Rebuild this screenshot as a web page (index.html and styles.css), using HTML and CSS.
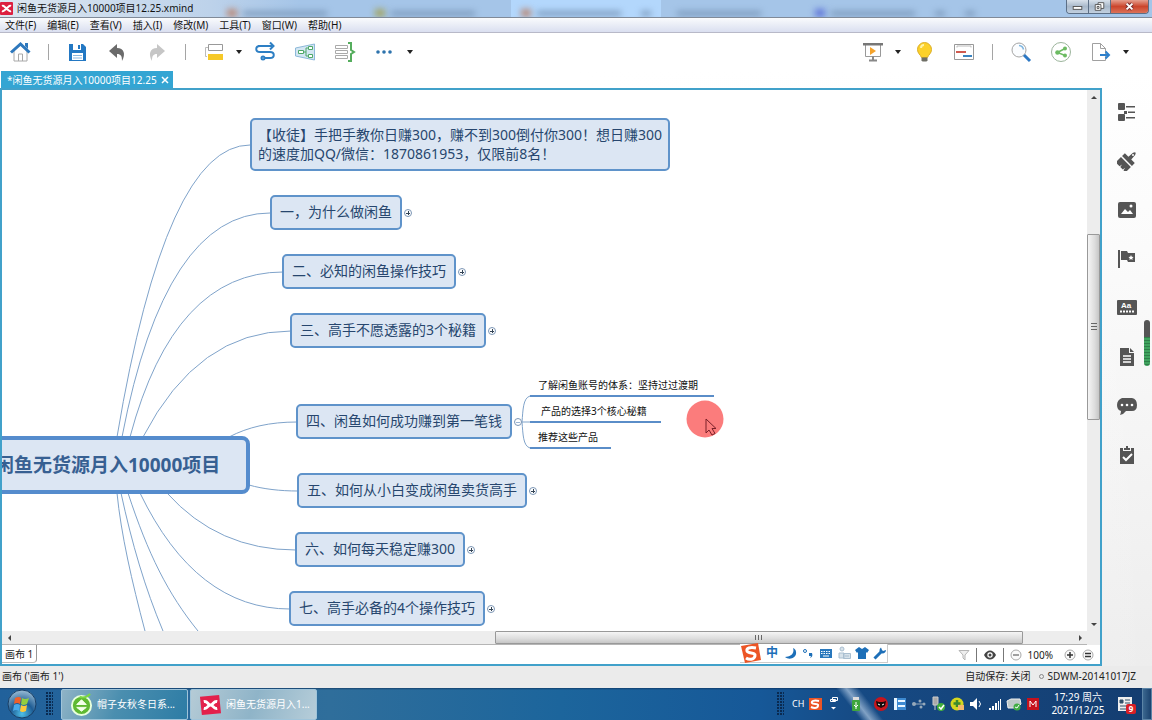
FILE: index.html
```html
<!DOCTYPE html>
<html lang="zh-CN">
<head>
<meta charset="utf-8">
<title>闲鱼无货源月入10000项目12.25.xmind</title>
<link rel="stylesheet" href="styles.css">
</head>
<body>
<header class="titlebar">
  <svg class="app-logo" viewBox="0 0 13 13"><rect width="13" height="13" rx="1" fill="#dc2040"/><path d="M2 4C4 3 5 6 6.500 6S9 3 11 4M2 9C4 10 5 7 6.500 7S9 10 11 9" fill="none" stroke="#fff" stroke-width="2"/></svg>
  <h1 class="title">闲鱼无货源月入10000项目12.25.xmind</h1>
  <div class="backdrop" aria-hidden="true">
    <i class="smudge orange"></i><i class="smudge long"></i><i class="smudge olive"></i><i class="smudge long"></i>
    <div class="lit"><i class="smudge orange"></i><i class="smudge long"></i><i class="smudge dot"></i></div>
    <i class="smudge long"></i><i class="smudge violet"></i><i class="smudge long"></i><i class="smudge dot"></i><i class="smudge dot"></i>
  </div>
  <div class="winbuttons">
    <button class="win" aria-label="最小化"><svg viewBox="0 0 22 13"><rect x="6.500" y="6.500" width="9" height="3" fill="#fff" stroke="#555"/></svg></button>
    <button class="win" aria-label="还原"><svg viewBox="0 0 22 13"><path d="M9.500 2.500h6v6h-6z" fill="#fff" stroke="#555"/><path d="M6.500 4.500h6v6h-6z" fill="#fff" stroke="#555"/><path d="M8.500 6.500h2v2h-2z" fill="none" stroke="#555"/></svg></button>
    <button class="win close" aria-label="关闭"><svg viewBox="0 0 38 13"><path d="M16 3.500l6 6M22 3.500l-6 6" stroke="#7a3030" stroke-width="4"/><path d="M16 3.500l6 6M22 3.500l-6 6" stroke="#fff" stroke-width="2"/></svg></button>
  </div>
</header>
<nav class="menubar">
  <button>文件(F)</button><button>编辑(E)</button><button>查看(V)</button><button>插入(I)</button><button>修改(M)</button><button>工具(T)</button><button>窗口(W)</button><button>帮助(H)</button>
</nav>
<div class="toolbar">
  <button class="tool" aria-label="主页"><svg viewBox="0 0 24 24"><path d="M6 11v10h13V11l-6.500-6z" fill="#fff" stroke="#a8a8a8"/><path d="M10.500 21v-7h4v7" fill="none" stroke="#a8a8a8"/><path d="M3 12.500L12.500 4l9 8.500" fill="none" stroke="#2d78bd" stroke-width="3"/><path d="M17 3h3v6l-3-3z" fill="#2d78bd"/></svg></button>
  <i class="sep"></i>
  <button class="tool" aria-label="保存"><svg viewBox="0 0 24 24"><path d="M4 4h14l3 3v14H4z" fill="#2378c3"/><path d="M8 4h8v6H8z" fill="#fff"/><path d="M13 5h2v4h-2z" fill="#2378c3"/><path d="M7 13h11v7H7z" fill="#fff"/><path d="M8 15.500h9M8 18h9" stroke="#8bb7df"/></svg></button>
  <button class="tool" aria-label="撤销"><svg viewBox="0 0 24 24"><path d="M4 11l8-7v4c7 0 9 6 5 13 0-5-1-7-5-7v4z" fill="#6b6b6b"/></svg></button>
  <button class="tool" aria-label="重做"><svg viewBox="0 0 24 24"><path d="M20 11l-8-7v4c-7 0-9 6-5 13 0-5 1-7 5-7v4z" fill="#c6c6c6"/></svg></button>
  <i class="sep"></i>
  <div class="split"><button class="tool" aria-label="主题"><svg viewBox="0 0 24 24"><path d="M6.500 4.500h14v6h-14z" fill="#fff" stroke="#999"/><path d="M6 7.500H3.500v9H5" fill="none" stroke="#bbb"/><path d="M6 14h15v6H6z" fill="#f6c928"/></svg></button><button class="drop" aria-label="更多主题"></button></div>
  <button class="tool" aria-label="联系"><svg viewBox="0 0 24 24" fill="none" stroke="#2d7fc4" stroke-width="2"><path d="M5 6h14M17 2.500L20.500 6 17 9.500M7 6C2 6 2 12 7 12h10c5 0 5 6 0 6h-5"/><circle cx="10" cy="18" r="1.500"/></svg></button>
  <button class="tool" aria-label="外框"><svg viewBox="0 0 24 24"><path d="M2.500 8L21.500 4v16L2.500 16z" fill="#d3e6f3" stroke="#8db9d9"/><path d="M5.500 10.500h5v3h-5zM15.500 6.500h4v3h-4zM15.500 14.500h4v3h-4z" fill="#fff" stroke="#4fa968"/><path d="M10.500 12h2.500M15 8h-2v8h2" fill="none" stroke="#4fa968"/></svg></button>
  <button class="tool" aria-label="概要"><svg viewBox="0 0 24 24" fill="none"><path d="M2.500 5.500h12v3h-12zM2.500 10.500h12v3h-12zM2.500 15.500h12v3h-12z" stroke="#aaa"/><path d="M15 3h3v7l3 2-3 2v7h-3" stroke="#55ad5d" stroke-width="2"/></svg></button>
  <div class="split"><button class="tool" aria-label="更多"><svg viewBox="0 0 24 24" fill="#2d73ad"><circle cx="5" cy="12" r="1.800"/><circle cx="11" cy="12" r="1.800"/><circle cx="17" cy="12" r="1.800"/></svg></button><button class="drop" aria-label="更多选项"></button></div>
  <i class="grow"></i>
  <div class="split"><button class="tool" aria-label="演示"><svg viewBox="0 0 24 24"><path d="M4.500 5v11.500h15V5" fill="#fff" stroke="#999"/><path d="M2 3h20v2.500H2z" fill="#777"/><path d="M12 16.500V20M8 20.500h8" stroke="#888" stroke-width="2"/><path d="M9 7l6 4-6 4z" fill="#f5a32c"/></svg></button><button class="drop" aria-label="演示选项"></button></div>
  <button class="tool" aria-label="头脑风暴"><svg viewBox="0 0 24 24"><path d="M12.500 2.500a7 7 0 0 0-7 7c0 4 3 5 4 8h6c1-3 4-4 4-8a7 7 0 0 0-7-7z" fill="#fcd12a" stroke="#dcaf28"/><path d="M9 8c0-2 1-3 3-3" stroke="#fff3a5" stroke-width="2" fill="none"/><path d="M9.500 17.500h6v3l-1 1h-4l-1-1z" fill="#6f6f66"/></svg></button>
  <button class="tool" aria-label="甘特图"><svg viewBox="0 0 24 24"><path d="M2.500 4.500h19v15h-19z" fill="#fff" stroke="#999"/><path d="M5 7.500V6h14v1.500" stroke="#bbb" fill="none"/><path d="M4 12h10" stroke="#d05a4f" stroke-width="2"/><path d="M11 16h9" stroke="#3a83c0" stroke-width="2"/></svg></button>
  <i class="sep"></i>
  <button class="tool" aria-label="搜索"><svg viewBox="0 0 24 24"><circle cx="10" cy="10" r="7" fill="#fbfdff" stroke="#a5a5a5"/><path d="M10 5.500a5 5 0 0 1 4.500 4" stroke="#7db5e0" stroke-width="1.500" fill="none"/><path d="M15 15l6 6" stroke="#2d78c4" stroke-width="3"/></svg></button>
  <button class="tool" aria-label="分享"><svg viewBox="0 0 24 24"><circle cx="12" cy="12" r="9.500" fill="#fff" stroke="#9cb59c"/><path d="M16 8.500L8.500 12.500 16 15.500" fill="none" stroke="#6cbb62" stroke-width="1.500"/><g fill="#6cbb62"><circle cx="8.500" cy="12.500" r="2.300"/><circle cx="16" cy="8.500" r="2"/><circle cx="16" cy="15.500" r="2"/></g></svg></button>
  <div class="split last"><button class="tool" aria-label="导出"><svg viewBox="0 0 24 24"><path d="M3.500 3.500h8l5 5v12h-13z" fill="#fff" stroke="#a0a0a0"/><path d="M11.500 3.500v5h5" fill="none" stroke="#a0a0a0"/><path d="M11 15h8M16.500 11.500L20 15l-3.500 3.500" fill="none" stroke="#2e80cc" stroke-width="2"/></svg></button><button class="drop" aria-label="导出选项"></button></div>
</div>
<div class="workspace">
  <main class="editor">
    <div class="tabs"><div class="tab"><span>*闲鱼无货源月入10000项目12.25</span><button aria-label="关闭标签"><svg viewBox="0 0 8 8"><path d="M1 1l6 6M7 1L1 7" stroke="#fff" stroke-width="1.500"/></svg></button></div></div>
    <div class="frame">
      <div class="canvas">
        <svg class="links" width="1085" height="541" viewBox="2 90 1085 541">
          <g fill="none" stroke="#7fa3ca">
            <path d="M117 437Q166 145 250 145"/>
            <path d="M122 437Q165 213 270 213"/>
            <path d="M130 437Q174 272 283 272"/>
            <path d="M143 437Q198 331 291 331"/>
            <path d="M229 437C248 427 270 422 297 422"/>
            <path d="M249 485C263 489 280 491 298 491"/>
            <path d="M167 493Q218 550 296 550"/>
            <path d="M140 493Q196 609 290 609"/>
            <path d="M128 493C148 554 168 594 198 631"/>
            <path d="M121 493C132 544 145 588 163 631"/>
            <path d="M117 493C121 534 132 582 145 631"/>
            <path d="M521 422h9M530 396C523 398 523 410 522 422 523 434 523 446 530 448"/>
          </g>
        </svg>
        <div class="topic central">闲鱼无货源月入10000项目</div>
        <div class="topic main t0">【收徒】手把手教你日赚300，赚不到300倒付你300！想日赚300<br>的速度加QQ/微信：1870861953，仅限前8名！</div>
        <div class="topic main t1">一，为什么做闲鱼<button class="fold" aria-label="展开"></button></div>
        <div class="topic main t2">二、必知的闲鱼操作技巧<button class="fold" aria-label="展开"></button></div>
        <div class="topic main t3">三、高手不愿透露的3个秘籍<button class="fold" aria-label="展开"></button></div>
        <div class="topic main t4">四、闲鱼如何成功赚到第一笔钱<button class="fold open" aria-label="收起"></button></div>
        <div class="topic main t5">五、如何从小白变成闲鱼卖货高手<button class="fold" aria-label="展开"></button></div>
        <div class="topic main t6">六、如何每天稳定赚300<button class="fold" aria-label="展开"></button></div>
        <div class="topic main t7">七、高手必备的4个操作技巧<button class="fold" aria-label="展开"></button></div>
        <ul class="subtopics">
          <li class="s1">了解闲鱼账号的体系：坚持过过渡期</li>
          <li class="s2">产品的选择3个核心秘籍</li>
          <li class="s3">推荐这些产品</li>
        </ul>
        <svg class="pointer" viewBox="0 0 38 38"><circle cx="19" cy="19" r="18.500" fill="#fb7c7c"/><path d="M20 19v14l3-3 3 5 3-1.500-3-5h4z" fill="#fb7c7c" stroke="#7a2028"/></svg>
      </div>
      <div class="vscroll"><i class="arrow up"></i><i class="v-before"></i><i class="v-thumb"></i><i class="v-after"></i><i class="arrow down"></i></div>
      <div class="hscroll"><i class="arrow left"></i><i class="h-before"></i><i class="h-thumb"></i><i class="h-after"></i><i class="arrow right"></i></div>
      <div class="sheets">
        <button class="sheet">画布 1</button>
        <div class="zoombar">
          <button aria-label="筛选"><svg viewBox="0 0 12 12"><path d="M1 1.500h10L7 6v5L5 9V6z" fill="#eee" stroke="#b5b5b5"/></svg></button><i class="bar"></i>
          <button class="eye" aria-label="显示"><svg viewBox="0 0 14 12"><path d="M1 6c3-6 9-6 12 0-3 6-9 6-12 0z" fill="#444"/><circle cx="7" cy="6" r="2.700" fill="#fff"/><circle cx="7" cy="6" r="1.500" fill="#444"/></svg></button><i class="bar"></i>
          <button aria-label="缩小"><svg viewBox="0 0 12 12"><circle cx="6" cy="6" r="5" fill="#fafafa" stroke="#aaa"/><path d="M3 6h6" stroke="#444"/></svg></button>
          <span class="percent">100%</span>
          <button aria-label="放大"><svg viewBox="0 0 12 12"><circle cx="6" cy="6" r="5" fill="#fafafa" stroke="#aaa"/><path d="M3 6h6M6 3v6" stroke="#333" stroke-width="1.500"/></svg></button>
          <button aria-label="适应"><svg viewBox="0 0 12 12"><circle cx="6" cy="6" r="5" fill="#fafafa" stroke="#aaa"/><path d="M3 4.500h6M3 7.500h6" stroke="#333" stroke-width="1.500"/></svg></button>
        </div>
        <div class="ime">
          <svg class="ime-logo" viewBox="0 0 22 22"><path d="M1 4L18 1l3 17-16 3z" fill="#ec5526"/><path d="M16 6C10 5 6 6 7 9s9 1 8 5-6 4-9 2" fill="none" stroke="#fff" stroke-width="3"/></svg>
          <span class="zh">中</span>
          <svg viewBox="0 0 14 14"><path d="M10 2c2 6-3 9-8 9 5 4 12 0 11-5 0-2-1-3-3-4z" fill="#1d6fb8"/></svg>
          <svg viewBox="0 0 14 14"><circle cx="4" cy="5" r="1.500" fill="none" stroke="#1d6fb8"/><path d="M8 7h3c1 3 0 4-2 5l1-2H8z" fill="#1d6fb8"/></svg>
          <svg viewBox="0 0 14 14"><path d="M1 3h12v9H1z" fill="#2978bd"/><path d="M2 5.500h10M2 7.500h10" stroke="#fff" stroke-dasharray="1.500 1"/><path d="M4 10h6" stroke="#fff"/></svg>
          <svg viewBox="0 0 14 14" stroke="#a9bed0" fill="#d7e2ea"><circle cx="5" cy="3" r="2"/><path d="M2 12V7h5v5zM6.500 7.500h7v5h-7zM8 10h4"/></svg>
          <svg viewBox="0 0 14 14"><path d="M4 1l3 2 3-2 4 3-2 3-1-1v7H3V6L2 7 0 4z" fill="#1d6fb8"/></svg>
          <svg viewBox="0 0 14 14"><path d="M1.500 12.500L8 6" stroke="#1d6fb8" stroke-width="3"/><path d="M8 1.500C6 3 6 6 8 7s5 0 5-3l-3 1-1-1z" fill="#1d6fb8"/></svg>
        </div>
      </div>
    </div>
  </main>
  <aside class="sidebar">
    <div class="side-list">
      <button aria-label="大纲"><svg viewBox="0 0 20 20" fill="#555"><rect x="1" y="1" width="7" height="7" rx="1"/><rect x="1" y="12" width="7" height="7" rx="1"/><path d="M9 4h9v1.500H9zM9 15h9v1.500H9zM7 9h3v3H7zM11 9.500h7V11h-7z"/></svg></button>
      <button aria-label="格式"><svg viewBox="0 0 20 20"><g transform="rotate(45 10 10)" fill="#555"><path d="M8.500 0q1.500-4 3 0l.500 6H17v4H3V6h5z"/><path d="M3 11.500h14V19h-3l-.500-3-.500 3H9.500L9 16l-.500 3H3z"/></g><circle cx="16" cy="4" r="1" fill="#fff"/></svg></button>
      <button aria-label="图片"><svg viewBox="0 0 20 20"><rect x="1" y="2" width="18" height="16" rx="2" fill="#555"/><path d="M4 14l4-5 3 3 2-2 3 4z" fill="#fff"/><circle cx="14" cy="6" r="1.500" fill="#fff"/></svg></button>
      <button aria-label="图标"><svg viewBox="0 0 20 20"><path d="M1 1h2v18H1zM4 2h6l1 2h7v9h-7l-1-2H4z" fill="#555"/><path d="M14 6l.800 1.700 1.700.300-1.200 1.200.300 1.800-1.600-.900-1.600.900.300-1.800L11.500 8l1.700-.300z" fill="#fff"/></svg></button>
      <button aria-label="标签"><svg viewBox="0 0 20 20"><rect x="0" y="2" width="20" height="15" rx="1" fill="#555"/><text x="4" y="10" class="aa">Aa</text><path d="M3 13.500h14" stroke="#fff" stroke-width="2" stroke-dasharray="2 1"/></svg></button>
      <button aria-label="备注"><svg viewBox="0 0 20 20"><path d="M3 1h9v5h5v13H3z" fill="#555"/><path d="M13 1l4 4h-4z" fill="#555"/><path d="M6 9h8M6 12h8M6 15h8" stroke="#fff" stroke-width="1.300"/></svg></button>
      <button aria-label="批注"><svg viewBox="0 0 20 20"><path d="M5 2h10q5 1 5 7t-5 6H9q-2 3-6 4 1-2 1-4-4-1-4-6t5-7z" fill="#555"/><g fill="#fff"><circle cx="5" cy="9" r="1.300"/><circle cx="10" cy="9" r="1.300"/><circle cx="15" cy="9" r="1.300"/></g></svg></button>
      <button aria-label="任务"><svg viewBox="0 0 20 20"><path d="M3 3h3v3h8V3h3v16H3z" fill="#555"/><path d="M7 3h2V1h2v2h2v2H7z" fill="#555"/><path d="M6 12l3 3 6-6" fill="none" stroke="#fff" stroke-width="2"/></svg></button>
    </div>
    <i class="meter"></i>
  </aside>
</div>
<footer class="status"><span>画布 ('画布 1')</span><span class="saved">自动保存: 关闭</span><i class="ring"></i><span>SDWM-20141017JZ</span></footer>
<div class="taskbar">
  <button class="start" aria-label="开始"><svg viewBox="0 0 32 32"><defs><radialGradient id="orb" cx="50%" cy="85%" r="80%"><stop offset="0" stop-color="#4fc0e8"/><stop offset=".5" stop-color="#1e5c94"/><stop offset="1" stop-color="#8fb4cf"/></radialGradient></defs><circle cx="16" cy="16" r="14" fill="url(#orb)" stroke="#193f66"/><path d="M9 10q4-2 6 0l-1 6q-3-2-6 0z" fill="#f0602a"/><path d="M16 10q3 2 7 0l-2 6q-4 2-6 0z" fill="#93cf3f"/><path d="M8 17q3-2 6 0l-1 6q-3-2-6 0z" fill="#49a9ea"/><path d="M15 17q3 2 6 0l-1 6q-4 2-6 0z" fill="#fdc83a"/></svg></button>
  <i class="grip"></i>
  <button class="task"><svg viewBox="0 0 24 24"><circle cx="12" cy="13" r="10" fill="#5fb932" stroke="#e8ffdc" stroke-width="2"/><path d="M7 12h10l-5-5zM7 15h10l-5 4z" fill="#f3ffe9" stroke="#f3ffe9" stroke-linejoin="round"/><path d="M10 4q6 2 11-3" stroke="#7bd645" stroke-width="2" fill="none"/></svg><span>帽子女秋冬日系...</span></button>
  <button class="task active"><svg viewBox="0 0 24 24"><path d="M1 4l20-2 2 19-20 2z" fill="#e3214b"/><path d="M5 9c4-1 4 3.500 7 3.500s3-4.500 7-3.500M5 16c4 1 4-3.500 7-3.500s3 4.500 7 3.500" fill="none" stroke="#fff" stroke-width="3"/></svg><span>闲鱼无货源月入1...</span></button>
  <i class="grow"></i>
  <div class="tray">
    <i class="grip"></i>
    <span class="lang">CH</span>
    <svg viewBox="0 0 16 16"><path d="M2 2h13v12H2z" fill="#ec5526"/><path d="M12 5C7 4 4 5 5 7s7 0 6 3-5 2-7 1" fill="none" stroke="#fff" stroke-width="2"/></svg>
    <svg viewBox="0 0 16 16"><path d="M6.500 1.500h5v3h-5zM4.500 3.500h5v2h-5z" fill="none" stroke="#fff"/><path d="M5 11h5l-2.500 2.500z" fill="#fff"/></svg>
    <svg class="usb" viewBox="0 0 16 16"><path d="M5 1h6v4H5z" fill="#ddd"/><rect x="4" y="4" width="8" height="11" rx="1" fill="#3fa63d"/><path d="M8 6v7M6 9l2 2 2-2" stroke="#fff" fill="none"/></svg>
    <svg class="wide" viewBox="0 0 16 16"><circle cx="8" cy="8" r="7" fill="#c8151c"/><path d="M3 5l3 1h4l3-1-1 5-4 2-4-2z" fill="#180b0b"/><path d="M5 8l2 1M11 8l-2 1" stroke="#fff"/></svg>
    <svg viewBox="0 0 16 16"><path d="M2 2h12v12H2z" fill="#3d8ad1"/><path d="M2 2h3v12H2zM6 4h7v2H6zM6 9h7v2H6z" fill="#e9f6ff"/></svg>
    <svg viewBox="0 0 16 16" fill="#96a9ba"><path d="M2 8h12" stroke="#96a9ba"/><circle cx="3" cy="8" r="2"/><circle cx="9" cy="5" r="1.500"/><circle cx="10" cy="11" r="1.500"/><circle cx="13" cy="8" r="1.500"/></svg>
    <svg viewBox="0 0 16 16"><path d="M3 1h5v8H3zM5 9v5" fill="#aaa" stroke="#ccc"/><circle cx="11" cy="11" r="4" fill="#42ae3c"/><path d="M9 11l2 2 3-4" fill="none" stroke="#fff" stroke-width="1.500"/></svg>
    <svg viewBox="0 0 16 16"><circle cx="8" cy="8" r="6.500" fill="#d5d61f"/><path d="M8 4v7M4.500 7.500h7" stroke="#3d8a2e" stroke-width="2.500"/><path d="M9 9h6v5H9z" fill="#f5b76a"/></svg>
    <svg viewBox="0 0 16 16"><path d="M2 6h3l4-4v12L5 10H2z" fill="#fff"/><path d="M11 5q3 3 0 6" stroke="#fff" fill="none"/></svg>
    <svg viewBox="0 0 16 16" fill="#fff"><path d="M2 12h2v2H2zM5 10h2v4H5zM8 7h2v7H8zM11 5h1v9h-1zM13 3h1v11h-1z"/></svg>
    <svg viewBox="0 0 16 16"><path d="M1 5l4-2h9l1 5-4 4H2z" fill="#bfc9c9" stroke="#eee"/><circle cx="11" cy="11" r="3.500" fill="#41ad44"/><path d="M9 11l2 1 2-3" stroke="#fff" fill="none"/></svg>
    <svg viewBox="0 0 16 16"><path d="M2 2h12v12H2z" fill="#c6121d"/><path d="M5 11V5l3 4 3-4v6" fill="none" stroke="#fff"/></svg>
    <div class="clock"><span>17:29 周六</span><span>2021/12/25</span></div>
    <div class="news"><svg viewBox="0 0 16 16"><path d="M1 1h14v14H1z" fill="#eee"/><path d="M3 4h3v3H3zM8 4h5M8 7h5M3 10h10M3 13h10" stroke="#32506b" fill="#32506b"/></svg><b>9</b></div>
    <button class="desktop" aria-label="显示桌面"></button>
  </div>
</div>
</body>
</html>
```
FILE: styles.css
```css
* { box-sizing: border-box; }
body {
  margin: 0; height: 100vh; overflow: hidden; display: flex; flex-direction: column;
  font: 10px/14px "Noto Sans", "Noto Sans CJK SC", sans-serif; color: #222; background: #fff;
}
button { border: 0; padding: 0; margin: 0; background: none; font: inherit; color: inherit; }
svg { display: block; }
ul { list-style: none; margin: 0; padding: 0; }
.grow { flex: 1; }

.titlebar { flex: none; height: 18px; display: flex; align-items: flex-start; background: linear-gradient(90deg, #dde7f1 0, #bdd2ea 210px, #a5c5e8 300px, #a5c5e8); border-bottom: 1px solid #808a98; overflow: hidden; }
.app-logo { width: 13px; height: 13px; margin-top: 2px; }
.title { margin: 1px 0 0 4px; font-size: 10px; font-weight: 400; line-height: 15px; white-space: nowrap; color: #111; }
.backdrop { flex: 1; height: 17px; display: flex; align-items: center; gap: 6px; padding-left: 34px; overflow: hidden; }
.smudge { width: 10px; height: 8px; margin-top: 9px; filter: blur(3px); flex: none; }
.smudge.orange { background: #b98b7a; }
.smudge.olive { background: #a3a563; margin-left: 42px; }
.smudge.violet { background: #6076d8; margin-left: 48px; }
.smudge.long { width: 84px; background: #7d9bbd; height: 5px; }
.smudge.dot { background: #7d9bbd; height: 5px; margin-left: 14px; }
.lit { display: flex; gap: 6px; align-items: center; height: 17px; padding: 0 10px; margin: 0 10px 0 30px; background: #b3d7fc; flex: none; }
.winbuttons { display: flex; flex: none; margin-right: 3px; border: 1px solid #5c6f86; border-top: 0; border-radius: 0 0 4px 4px; overflow: hidden; }
.win { width: 22px; height: 13px; background: linear-gradient(#d8e1eb, #a8b8ca 50%, #c2d0df); border-right: 1px solid #5c6f86; }
.win svg { height: 13px; width: 100%; }
.win.close { width: 37px; border: 0; background: linear-gradient(#e5a08f, #cb452c 50%, #dc7258); }

.menubar { flex: none; height: 15px; display: flex; gap: 11px; padding-left: 5px; background: linear-gradient(#fafbfd, #eef1f8 35%, #dadff0); border-bottom: 1px solid #b8b9c8; white-space: nowrap; }
.menubar button { line-height: 14px; color: #111; }

.toolbar { flex: none; height: 38px; display: flex; align-items: center; gap: 16px; padding: 0 22px 0 8px; }
.tool, .tool svg { width: 24px; height: 24px; }
.sep { width: 1px; height: 16px; background: #a5a5a5; }
.split { display: flex; align-items: center; gap: 9px; margin-right: -6px; }
.split.last { margin-right: 0; }
.drop { width: 8px; height: 24px; display: flex; align-items: center; justify-content: center; }
.drop::before { content: ""; border: 3px solid transparent; border-top: 4px solid #222; border-bottom: 0; }

.workspace { flex: 1; min-height: 0; display: flex; background: linear-gradient(90deg, #fff 50%, transparent), linear-gradient(#fff, #fbfbfb 30%, #ededed); }
.editor { flex: 1; min-width: 0; display: flex; flex-direction: column; }
.tabs { height: 17px; padding-left: 1px; display: flex; flex: none; }
.tab { display: flex; align-items: center; gap: 4px; padding: 0 4px 0 6px; background: #34a5d3; color: #fff; white-space: nowrap; }
.tab button, .tab svg { width: 8px; height: 8px; }
.frame { flex: 1; min-height: 0; border: 2px solid #41a1ca; background: #fff; display: grid; grid-template: minmax(0, 1fr) 14px 19px / minmax(0, 1fr) 13px; }
.canvas { position: relative; overflow: hidden; background: #fff; }
.links { position: absolute; left: 0; top: 0; }

.topic { position: absolute; white-space: nowrap; }
.main { height: 35px; padding: 0 8px; border: 2px solid #5f93ca; border-radius: 5px; background: #dce6f3; color: #27466e; font-size: 14px; line-height: 30px; }
.central { left: -37px; top: 346px; height: 58px; padding: 0 26px; border: 4px solid #558ccd; border-radius: 8px; background: #dce6f3; color: #376092; font-size: 19px; font-weight: 700; line-height: 50px; }
.t0 { left: 248px; top: 28px; height: 53px; padding: 5px 6px; line-height: 19px; }
.t1 { left: 268px; top: 105px; }
.t2 { left: 280px; top: 164px; }
.t3 { left: 288px; top: 223px; }
.t4 { left: 294px; top: 314px; }
.t5 { left: 295px; top: 383px; }
.t6 { left: 293px; top: 442px; }
.t7 { left: 287px; top: 501px; }
.fold { position: absolute; right: -12px; top: 12px; width: 8px; height: 8px; border: 1px solid #7c96b5; border-radius: 50%; background: linear-gradient(#345, #345) center / 4px 1px no-repeat, linear-gradient(#345, #345) center / 1px 4px no-repeat, #fff; }
.fold.open { background: linear-gradient(#9bb5d3, #9bb5d3) center / 4px 1px no-repeat, #fff; }
.subtopics { position: absolute; left: 528px; top: 287px; display: flex; flex-direction: column; align-items: flex-start; gap: 6px; color: #111; }
.subtopics li { height: 20px; line-height: 17px; padding: 0 8px; border-bottom: 2px solid #5a8dc8; white-space: nowrap; }
.subtopics .s1 { padding: 0 16px 0 8px; }
.subtopics .s2 { padding-left: 11px; padding-right: 14px; }
.subtopics .s3 { padding-right: 13px; }
.pointer { position: absolute; left: 684px; top: 310px; width: 38px; height: 38px; }

.vscroll { display: flex; flex-direction: column; background: #ededed; }
.v-before { flex: 130; }
.v-thumb { flex: 185; border: 1px solid #999; border-radius: 1px; background: repeating-linear-gradient(#666 0 1px, transparent 1px 3px) center / 6px 7px no-repeat, linear-gradient(90deg, #f5f5f5, #ddd 60%, #c6c6c6); }
.v-after { flex: 198; }
.hscroll { grid-column: 1; display: flex; background: #ededed; border-bottom: 1px solid #b5b5b5; box-shadow: 13px 0 #ededed; }
.h-before { flex: 479; }
.h-thumb { flex: 527; border: 1px solid #999; border-radius: 1px; background: repeating-linear-gradient(90deg, #666 0 1px, transparent 1px 3px) center / 7px 5px no-repeat, linear-gradient(#f5f5f5, #ddd 60%, #c6c6c6); }
.h-after { flex: 50; }
.arrow { flex: 0 0 14px; display: flex; align-items: center; justify-content: center; }
.arrow::before { content: ""; border: 3px solid transparent; }
.up::before { border-top: 0; border-bottom-color: #444; }
.down::before { border-bottom: 0; border-top-color: #444; }
.left::before { border-left: 0; border-right-color: #444; }
.right::before { border-right: 0; border-left-color: #444; }
.sheets { grid-column: 1 / 3; position: relative; display: flex; align-items: flex-start; justify-content: space-between; }
.sheet { height: 18px; padding: 0 3px; border-right: 1px solid #999; border-bottom: 1px solid #bbb; border-radius: 0 0 4px 0; color: #222; }
.zoombar { display: flex; align-items: center; gap: 6px; height: 19px; padding-right: 6px; }
.zoombar svg { width: 12px; height: 12px; }
.zoombar .eye svg { width: 14px; }
.bar { width: 1px; height: 14px; background: #777; }
.percent { margin-right: 5px; }
.ime { position: absolute; left: 738px; top: -1px; height: 19px; display: flex; align-items: center; gap: 4px; background: #fff; border: 1px solid #ccc; border-left: 0; border-top: 0; }
.ime svg { width: 14px; height: 14px; }
.ime .ime-logo { width: 22px; height: 22px; }
.zh { width: 13px; font-size: 12px; font-weight: 700; color: #1d6fb8; }

.sidebar { flex: none; width: 50px; position: relative; padding: 31px 15px 0; }
.side-list { display: flex; flex-direction: column; gap: 29px; }
.side-list button, .side-list svg { width: 20px; height: 20px; }
.aa { font: 700 8px "Liberation Sans", sans-serif; fill: #fff; }
.meter { position: absolute; right: 2px; top: 249px; width: 6px; height: 46px; border-radius: 3px; background: linear-gradient(#555 17px, transparent 17px), repeating-linear-gradient(#3fa35e 0 2px, #2f7f49 2px 3px); }

.status { flex: none; height: 22px; display: flex; align-items: center; padding: 0 16px 2px 2px; background: #ebebeb; color: #222; white-space: nowrap; }
.saved { margin-left: auto; }
.ring { width: 5px; height: 5px; margin: 0 4px 0 8px; border: 1px solid #888; border-radius: 50%; }

.taskbar { flex: none; height: 32px; display: flex; align-items: center; background: linear-gradient(rgba(10, 40, 80, .6), transparent 2px), linear-gradient(90deg, #21619b 0, #2f6e9b 330px, #1c659c 560px, #165898 760px, #164a84 860px, #143d70); color: #fff; overflow: hidden; }
.start { width: 32px; margin-left: 6px; }
.start svg { width: 32px; height: 32px; }
.grip { width: 7px; height: 24px; margin: 0 8px; background: radial-gradient(circle at 1px 1px, #0a2a50 1px, transparent 1px) 0 0 / 3px 3px; }
.task { width: 127px; height: 31px; display: flex; align-items: center; gap: 4px; padding: 0 8px; margin-right: 2px; border: 1px solid #9fc4da; border-radius: 2px; background: linear-gradient(110deg, #8fb3c6, #4a8eaf 45%, #2d7ca5); color: #fff; white-space: nowrap; }
.task.active { background: linear-gradient(110deg, #b5cbd6, #8fb4c8 50%, #b6cdd9); }
.task svg { width: 23px; height: 23px; flex: none; }
.tray { display: flex; align-items: center; gap: 3px; height: 32px; background: linear-gradient(52deg, transparent 66px, rgba(200, 220, 240, .6) 74px, transparent 84px); }
.tray .grip { margin: 0 5px 0 0; }
.tray svg { width: 16px; height: 16px; }
.tray .usb { margin-left: 3px; }
.tray .wide { margin-left: 6px; }
.lang { width: 12px; font-size: 9px; }
.clock { display: flex; flex-direction: column; align-items: center; margin-left: 6px; line-height: 13px; width: 56px; }
.news { position: relative; margin-left: 8px; }
.news b { position: absolute; left: 9px; top: 8px; width: 10px; height: 10px; background: #d91f26; border-radius: 2px; font-size: 8px; line-height: 10px; text-align: center; }
.desktop { width: 10px; height: 32px; margin-left: 6px; border: 1px solid #5c84a6; background: linear-gradient(90deg, #3b678f, #1b426e); }
```
